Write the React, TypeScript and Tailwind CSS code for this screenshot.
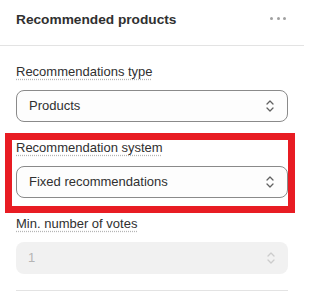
import React from "react";

const Chevrons = ({ color }: { color: string }) => (
  <svg width="10" height="14" viewBox="0 0 10 14" fill="none" stroke={color} strokeWidth="1.3" strokeLinecap="round" strokeLinejoin="round">
    <path d="M2 5 L5 2 L8 5" />
    <path d="M2 9 L5 12 L8 9" />
  </svg>
);

const Label = ({ children }: { children: React.ReactNode }) => (
  <div className="h-5 text-[13px] leading-5 text-[#303030]">
    <span className="underline decoration-dotted decoration-[#b5b5b5] underline-offset-[3px]">{children}</span>
  </div>
);

const Select = ({ value, disabled }: { value: string; disabled?: boolean }) => (
  <div
    className={
      disabled
        ? "mt-2 flex h-8 items-center justify-between rounded-lg bg-[#f1f1f1] pl-3 pr-3 text-[13px] text-[#b5b5b5]"
        : "mt-2 flex h-8 items-center justify-between rounded-lg border border-[#8a8a8a] bg-[#fdfdfd] pl-3 pr-3 text-[13px] text-[#303030]"
    }
  >
    <span>{value}</span>
    <Chevrons color={disabled ? "#cccccc" : "#616161"} />
  </div>
);

export default function App() {
  return (
    <div className="h-[295px] w-[304px] overflow-hidden bg-white" style={{ fontFamily: "'Liberation Sans', Arial, sans-serif" }}>
      <div className="flex h-[46px] items-start justify-between border-b border-[#e3e3e3] pl-4 pr-[18px] pt-[10px]">
        <div className="text-[13.7px] font-bold leading-5 text-[#303030]">Recommended products</div>
        <div className="mt-[7px] flex gap-[3.5px]">
          <span className="h-[3px] w-[3px] rounded-full bg-[#a0a0a0]" />
          <span className="h-[3px] w-[3px] rounded-full bg-[#a0a0a0]" />
          <span className="h-[3px] w-[3px] rounded-full bg-[#a0a0a0]" />
        </div>
      </div>
      <div className="flex flex-col gap-4 px-4 pt-4">
        <div>
          <Label>Recommendations type</Label>
          <Select value="Products" />
        </div>
        <div className="relative">
          <Label>Recommendation system</Label>
          <Select value="Fixed recommendations" />
          <div className="pointer-events-none absolute -bottom-[15px] -left-[11px] -right-[7px] -top-[5px] border-[7px] border-[#e81c23]" />
        </div>
        <div>
          <Label>Min. number of votes</Label>
          <Select value="1" disabled />
        </div>
        <div className="border-t border-[#e3e3e3]" />
      </div>
    </div>
  );
}
